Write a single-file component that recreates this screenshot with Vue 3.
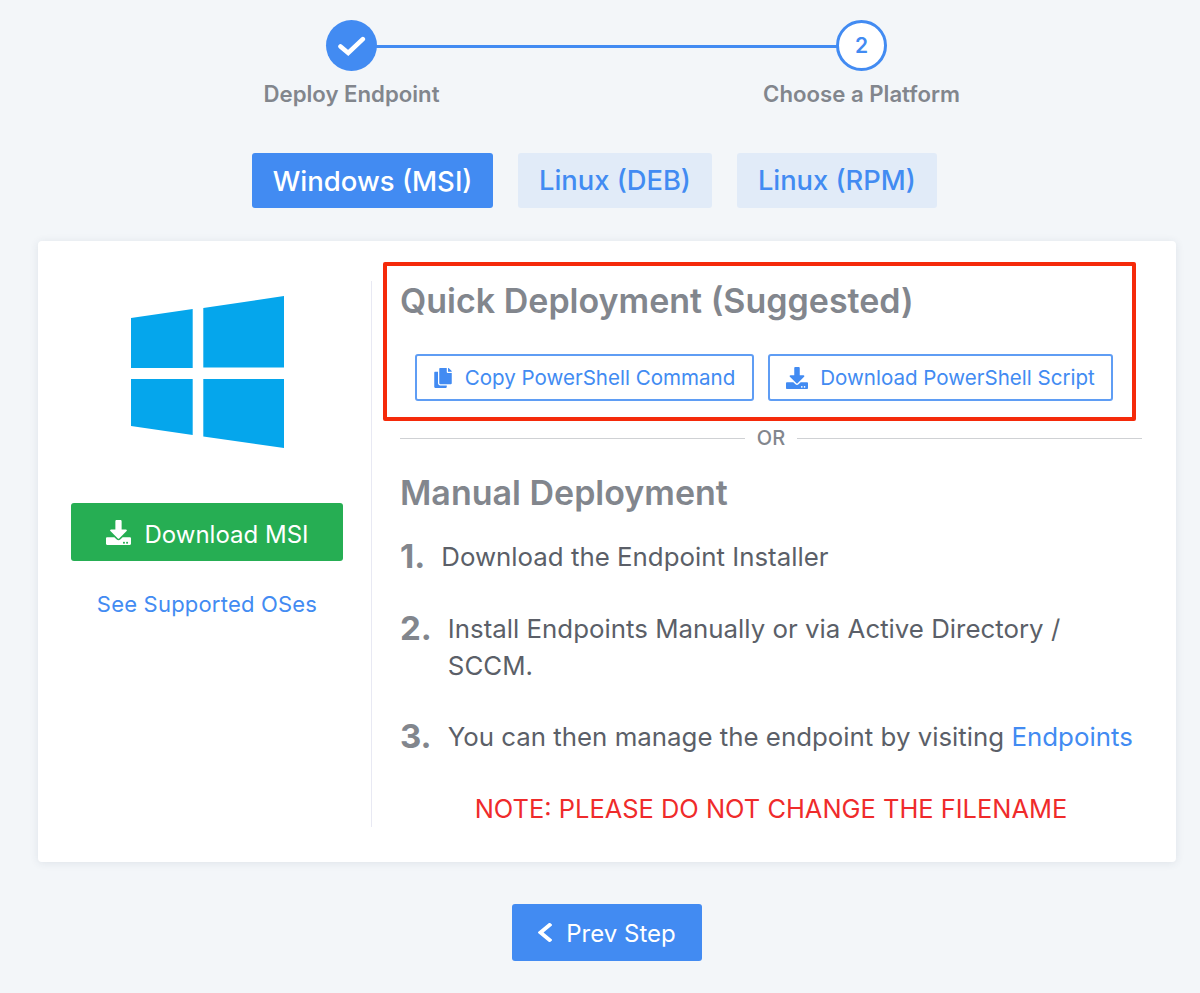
<script setup>
const steps = [
  { n: 1, text: 'Download the Endpoint Installer' },
  { n: 2, text: 'Install Endpoints Manually or via Active Directory / SCCM.' },
  { n: 3, text: 'You can then manage the endpoint by visiting ', link: 'Endpoints' },
]
const downloadPath = 'M216 0h80c13.3 0 24 10.7 24 24v168h87.7c17.8 0 26.7 21.5 14.1 34.1L269.7 378.3c-7.5 7.5-19.8 7.5-27.3 0L90.1 226.1c-12.6-12.6-3.7-34.1 14.1-34.1H192V24c0-13.3 10.7-24 24-24zm296 376v112c0 13.3-10.7 24-24 24H24c-13.3 0-24-10.7-24-24V376c0-13.3 10.7-24 24-24h146.7l49 49c20.1 20.1 52.5 20.1 72.6 0l49-49H488c13.3 0 24 10.7 24 24zm-124 88c0-11-9-20-20-20s-20 9-20 20 9 20 20 20 20-9 20-20zm64 0c0-11-9-20-20-20s-20 9-20 20 9 20 20 20 20-9 20-20z'
</script>

<template>
  <div class="page">
    <div class="stepper">
      <div class="step">
        <div class="circle done">
          <svg class="check" viewBox="0 0 29 21"><polyline points="3.5,10.5 11.2,17 25.8,3.2" fill="none" stroke="currentColor" stroke-width="4.6" stroke-linecap="round"/></svg>
        </div>
        <div class="step-label">Deploy Endpoint</div>
      </div>
      <div class="step">
        <div class="circle current">2</div>
        <div class="step-label">Choose a Platform</div>
      </div>
    </div>

    <div class="tabs">
      <button class="tab active">Windows (MSI)</button>
      <button class="tab">Linux (DEB)</button>
      <button class="tab">Linux (RPM)</button>
    </div>

    <div class="card">
      <div class="left">
        <svg class="winlogo" viewBox="0 0 153 152">
          <path fill="#05a6ec" d="M0 22 L61.7 13 V72 H0 Z"/>
          <path fill="#05a6ec" d="M72.3 12 L153 0 V71.5 H72.3 Z"/>
          <path fill="#05a6ec" d="M0 83 H61.7 V139 L0 130 Z"/>
          <path fill="#05a6ec" d="M72.3 83 H153 V152 L72.3 140.5 Z"/>
        </svg>
        <button class="msi">
          <svg class="msi-icon" viewBox="0 0 512 512"><path fill="currentColor" :d="downloadPath"/></svg>
          Download MSI
        </button>
        <a class="os-link">See Supported OSes</a>
      </div>

      <div class="right">
        <h2 class="heading">Quick Deployment (Suggested)</h2>
        <div class="ps-row">
          <button class="ps-btn copy">
            <svg class="ps-icon" viewBox="0 0 448 512"><path fill="currentColor" d="M320 448v40c0 13.255-10.745 24-24 24H24c-13.255 0-24-10.745-24-24V120c0-13.255 10.745-24 24-24h72v296c0 30.879 25.121 56 56 56h168zm0-344V0H152c-13.255 0-24 10.745-24 24v368c0 13.255 10.745 24 24 24h272c13.255 0 24-10.745 24-24V128H344c-13.2 0-24-10.8-24-24zm120.971-31.029L375.029 7.029A24 24 0 0 0 358.059 0H352v96h96v-6.059a24 24 0 0 0-7.029-16.97z"/></svg>
            Copy PowerShell Command
          </button>
          <button class="ps-btn dl">
            <svg class="ps-icon dl-icon" viewBox="0 0 512 512"><path fill="currentColor" :d="downloadPath"/></svg>
            Download PowerShell Script
          </button>
        </div>

        <div class="divider"><span>OR</span></div>

        <h2 class="heading manual">Manual Deployment</h2>
        <ol class="list">
          <li v-for="s in steps" :key="s.n" :class="['item', 'item-' + s.n]">
            <span class="num">{{ s.n }}.</span>
            <span class="item-text">{{ s.text }}<a v-if="s.link" class="inline-link">{{ s.link }}</a></span>
          </li>
        </ol>
        <p class="note">NOTE: PLEASE DO NOT CHANGE THE FILENAME</p>

        <div class="annotation"></div>
      </div>
    </div>

    <button class="prev">
      <svg class="chev" viewBox="27 37 265 438" preserveAspectRatio="none"><path fill="currentColor" d="M34.52 239.03L228.87 44.69c9.37-9.37 24.57-9.37 33.94 0l22.67 22.67c9.36 9.36 9.37 24.52.04 33.9L131.49 256l154.02 154.75c9.34 9.38 9.32 24.54-.04 33.9l-22.67 22.67c-9.37 9.37-24.57 9.37-33.94 0L34.52 272.97c-9.37-9.37-9.37-24.57 0-33.94z"/></svg>
      Prev Step
    </button>
  </div>
</template>

<style>
html, body { margin: 0; background: #f3f6f9; }
</style>

<style scoped>
.page {
  box-sizing: border-box;
  height: 993px;
  padding: 20px 24px 0 38px;
  background: #f3f6f9;
  font-family: Inter, "Noto Sans", sans-serif;
  display: flex;
  flex-direction: column;
  align-items: center;
  overflow: hidden;
}
button { font-family: inherit; cursor: pointer; }

.stepper {
  position: relative;
  display: flex;
  width: 1020px;
  margin-right: 1px;
}
.stepper::before {
  content: "";
  position: absolute;
  left: 255px;
  right: 255px;
  top: 25px;
  height: 3px;
  background: #428bf2;
}
.step {
  width: 510px;
  display: flex;
  flex-direction: column;
  align-items: center;
  position: relative;
}
.circle {
  box-sizing: border-box;
  width: 51px;
  height: 51px;
  border-radius: 50%;
  display: flex;
  align-items: center;
  justify-content: center;
}
.done { background: #428bf2; color: #fff; }
.check { width: 29px; height: 21px; margin-top: 1px; }
.current {
  border: 3px solid #428bf2;
  background: #fff;
  color: #428bf2;
  font-size: 21px;
  font-weight: 600;
}
.step-label {
  margin-top: 9px;
  font-size: 22.2px;
  line-height: 27px;
  font-weight: 600;
  color: #82868d;
}

.tabs {
  display: flex;
  gap: 25px;
  margin-top: 46px;
  margin-right: 25px;
}
.tab {
  height: 55px;
  padding: 0 21px;
  border: 0;
  border-radius: 3px;
  background: #e1ebf8;
  color: #428bf2;
  font-size: 27.3px;
  font-weight: 500;
}
.tab.active { background: #428bf2; color: #fff; font-size: 27.5px; padding: 0 20.5px; }

.card {
  box-sizing: border-box;
  width: 1138px;
  height: 621px;
  margin-top: 33px;
  padding: 40px 34px 35px 0;
  background: #fff;
  border-radius: 4px;
  box-shadow: 0 1px 8px rgba(40, 60, 90, 0.1);
  display: flex;
}
.left {
  box-sizing: border-box;
  width: 334px;
  flex: none;
  border-right: 1px solid #e8e9f3;
  display: flex;
  flex-direction: column;
  align-items: center;
  padding: 15px 0 0 5px;
}
.winlogo { width: 153px; height: 152px; }
.msi {
  margin-top: 55px;
  width: 272px;
  height: 58px;
  border: 0;
  border-radius: 3px;
  background: #26ae53;
  color: #fff;
  font-size: 24px;
  font-weight: 400;
  display: flex;
  align-items: center;
  justify-content: center;
  gap: 14px;
  padding: 4px 0 0;
}
.msi-icon { width: 25px; height: 25px; margin-top: -3px; }
.os-link {
  margin-top: 28px;
  font-size: 22px;
  line-height: 30px;
  color: #428bf2;
  letter-spacing: 0.2px;
}

.right {
  position: relative;
  flex: 1;
  padding-left: 28px;
  min-width: 0;
}
.heading {
  margin: 0;
  font-size: 34px;
  line-height: 40px;
  font-weight: 600;
  color: #82868d;
}
.ps-row {
  display: flex;
  gap: 14px;
  margin-top: 33px;
  margin-left: 15px;
}
.ps-btn {
  box-sizing: border-box;
  height: 47px;
  border: 2px solid #5f9df4;
  border-radius: 3px;
  background: #fff;
  color: #428bf2;
  font-size: 20.55px;
  display: flex;
  align-items: center;
  justify-content: center;
  gap: 13px;
  padding: 0;
}
.copy { width: 339px; }
.dl { width: 345px; gap: 12px; }
.ps-icon { width: 18px; height: 20px; }
.dl-icon { width: 22px; height: 22px; }
.divider {
  display: flex;
  align-items: center;
  gap: 12px;
  margin-top: 22px;
  height: 30px;
  color: #82868d;
  font-size: 20px;
  font-weight: 500;
}
.divider::before, .divider::after {
  content: "";
  flex: 1;
  height: 1px;
  background: #cfd1d4;
}
.manual { margin-top: 20px; }
.list { list-style: none; margin: 25px 0 0; padding: 0; }
.item { display: flex; align-items: flex-start; font-size: 25.85px; line-height: 37px; color: #5b5f68; }
.item + .item { margin-top: 34.5px; }
.num {
  flex: none;
  font-size: 33px;
  font-weight: 700;
  color: #82868d;
  margin-right: 16px;
}
.item-text { flex: 1; }
.inline-link { color: #428bf2; }
.note {
  margin: 39px 0 0;
  text-align: center;
  font-size: 25.45px;
  line-height: 30px;
  color: #ef2b2b;
}
.annotation {
  position: absolute;
  left: 11px;
  top: -19px;
  width: 753px;
  height: 159px;
  box-sizing: border-box;
  border: 4px solid #f52a0a;
  border-radius: 2px;
  pointer-events: none;
}

.prev {
  margin-top: 42px;
  width: 190px;
  height: 57px;
  border: 0;
  border-radius: 3px;
  background: #428bf2;
  color: #fff;
  font-size: 24px;
  display: flex;
  align-items: center;
  justify-content: center;
  gap: 14px;
  padding: 2px 0 0;
}
.chev { width: 14px; height: 19px; margin-top: -3px; }
</style>
